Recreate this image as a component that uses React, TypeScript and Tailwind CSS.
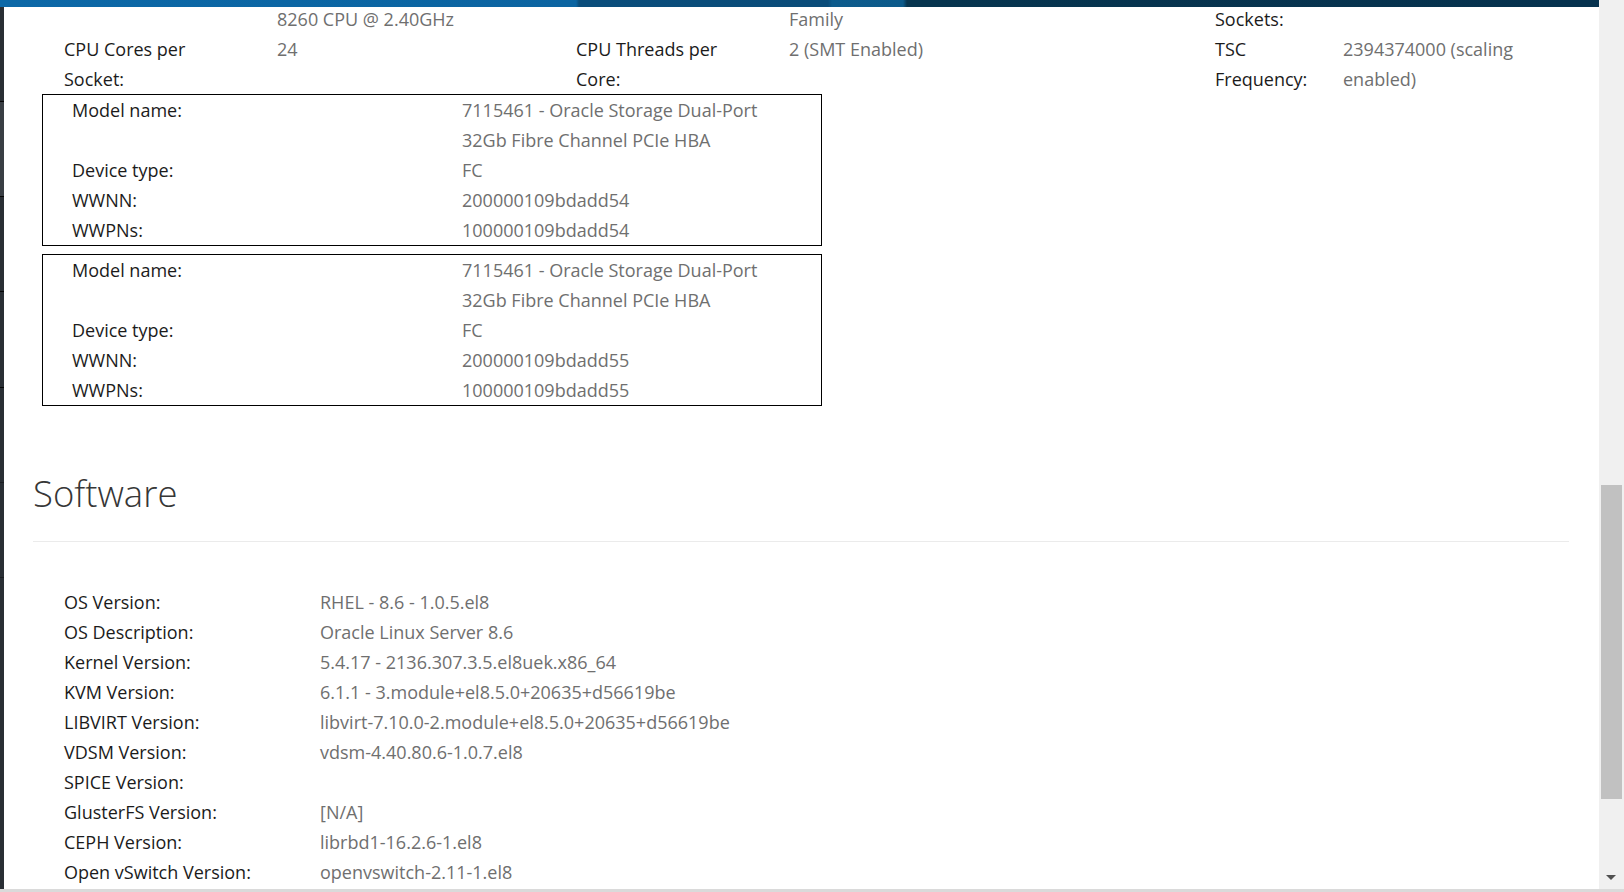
import React from "react";

const LABEL = "text-[#1b1b1b]";
const VALUE = "text-[#6f6f6f]";

function CpuCell({
  label,
  value,
  labelW,
  labelPr,
  valueW,
}: {
  label: React.ReactNode;
  value: React.ReactNode;
  labelW: string;
  labelPr: string;
  valueW: string;
}) {
  return (
    <div className="flex">
      <div className={`${labelW} ${labelPr} shrink-0 ${LABEL}`}>{label}</div>
      <div className={`${valueW} ${VALUE}`}>{value}</div>
    </div>
  );
}

function HbaBox({ suffix }: { suffix: string }) {
  const rows: [string, string][] = [
    ["Model name:", "7115461 - Oracle Storage Dual-Port 32Gb Fibre Channel PCIe HBA"],
    ["Device type:", "FC"],
    ["WWNN:", `200000109bdadd${suffix}`],
    ["WWPNs:", `100000109bdadd${suffix}`],
  ];
  return (
    <div className="w-[780px] border border-black pl-[29px]">
      {rows.map(([l, v]) => (
        <div key={l} className="flex">
          <div className={`w-[390px] shrink-0 ${LABEL}`}>{l}</div>
          <div className={`w-[315px] ${VALUE}`}>{v}</div>
        </div>
      ))}
    </div>
  );
}

const software: [string, string][] = [
  ["OS Version:", "RHEL - 8.6 - 1.0.5.el8"],
  ["OS Description:", "Oracle Linux Server 8.6"],
  ["Kernel Version:", "5.4.17 - 2136.307.3.5.el8uek.x86_64"],
  ["KVM Version:", "6.1.1 - 3.module+el8.5.0+20635+d56619be"],
  ["LIBVIRT Version:", "libvirt-7.10.0-2.module+el8.5.0+20635+d56619be"],
  ["VDSM Version:", "vdsm-4.40.80.6-1.0.7.el8"],
  ["SPICE Version:", ""],
  ["GlusterFS Version:", "[N/A]"],
  ["CEPH Version:", "librbd1-16.2.6-1.el8"],
  ["Open vSwitch Version:", "openvswitch-2.11-1.el8"],
];

export default function App() {
  return (
    <div
      className="relative flex h-[892px] w-[1624px] flex-col overflow-hidden bg-white text-[18px] leading-[30px]"
      style={{ fontFamily: '"Open Sans", "Noto Sans", sans-serif' }}
    >
      {/* fixed header strip */}
      <div className="absolute left-0 top-0 z-10 h-[7px] w-[1599px] bg-[linear-gradient(90deg,#0c68a7_0px,#0b64a1_576px,#0a4d7b_579px,#0a4c79_828px,#0d5b8c_832px,#0c5a8a_903px,#07354f_907px,#06324e_1599px)]" />

      <div className="flex min-h-0 flex-1">
        {/* collapsed vertical nav edge */}
        <div className="mt-[7px] flex w-[4px] shrink-0 flex-col bg-[#292e34]">
          <div className="h-[95px] border-b border-[#050505]" />
          <div className="h-[95px] border-b border-[#050505] bg-[#393e44]" />
          <div className="h-[95px] border-b border-[#050505]" />
          <div className="h-[96px] border-b border-[#050505]" />
          <div className="h-[95px] border-b border-[#1a1d21]" />
          <div className="h-[95px] border-b border-[#1a1d21]" />
        </div>

        {/* main content */}
        <div className="min-w-0 flex-1 pl-[29px] pr-[30px] pt-[4px]">
          {/* CPU rows */}
          <div className="pl-[31px]">
            <div className="flex">
              <div className="w-[512px] shrink-0">
                <CpuCell label="" value="8260 CPU @ 2.40GHz" labelW="w-[213px]" labelPr="pr-[43px]" valueW="w-[280px]" />
              </div>
              <div className="w-[639px] shrink-0">
                <CpuCell label="" value="Family" labelW="w-[213px]" labelPr="pr-[43px]" valueW="w-[400px]" />
              </div>
              <div className="flex-1">
                <CpuCell label="Sockets:" value="" labelW="w-[128px]" labelPr="pr-[10px]" valueW="w-[210px]" />
              </div>
            </div>
            <div className="flex">
              <div className="w-[512px] shrink-0">
                <CpuCell label="CPU Cores per Socket:" value="24" labelW="w-[213px]" labelPr="pr-[43px]" valueW="w-[280px]" />
              </div>
              <div className="w-[639px] shrink-0">
                <CpuCell label="CPU Threads per Core:" value="2 (SMT Enabled)" labelW="w-[213px]" labelPr="pr-[43px]" valueW="w-[400px]" />
              </div>
              <div className="flex-1">
                <CpuCell label="TSC Frequency:" value="2394374000 (scaling enabled)" labelW="w-[128px]" labelPr="pr-[10px]" valueW="w-[210px]" />
              </div>
            </div>
          </div>

          {/* HBA boxes */}
          <div className="ml-[9px] flex flex-col gap-[8px]">
            <HbaBox suffix="54" />
            <HbaBox suffix="55" />
          </div>

          {/* Software */}
          <h2 className="mt-[66px] text-[36.5px] font-light leading-[42px] text-[#363636]">
            Software
          </h2>
          <div className="mt-[27px] h-px bg-[#ebebeb]" />

          <div className="mt-[45px] pl-[31px]">
            {software.map(([l, v]) => (
              <div key={l} className="flex">
                <div className={`w-[256px] shrink-0 ${LABEL}`}>{l}</div>
                <div className={VALUE}>{v}</div>
              </div>
            ))}
          </div>
        </div>

        {/* vertical scrollbar */}
        <div className="relative w-[25px] shrink-0 bg-[#f0f0f0]">
          <div className="absolute left-[2px] top-[485px] h-[314px] w-[21px] bg-[#c1c1c1]" />
          <div className="absolute left-[7px] top-[875px] h-0 w-0 border-l-[5px] border-r-[5px] border-t-[5px] border-l-transparent border-r-transparent border-t-[#505050]" />
        </div>
      </div>

      {/* bottom edge (horizontal scrollbar) */}
      <div className="h-[3px] shrink-0 bg-[#dadada]" />
    </div>
  );
}
